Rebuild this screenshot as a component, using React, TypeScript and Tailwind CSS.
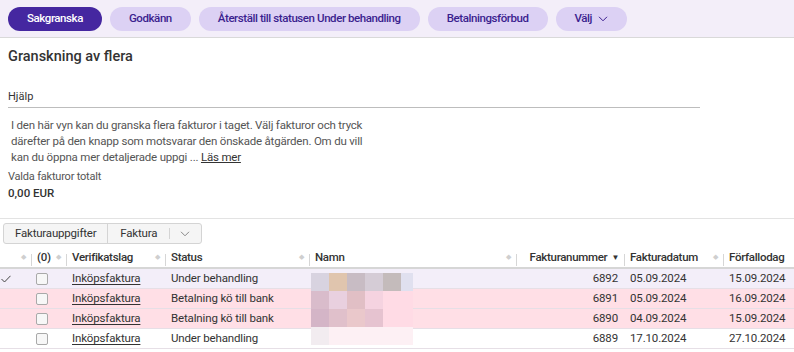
import React from 'react';

const font = { fontFamily: 'Roboto, "Noto Sans", sans-serif' };

const mosaic = [
  ['#d8d3e0', '#e0c5ae', '#c8bcc4', '#d5ccd6', '#c4bbbb', '#e0e0ef'],
  ['#d9bccb', '#e9d0df', '#e1bfc5', '#f5d3e0', '#ffdbe5', '#ffdbe5'],
  ['#d4b5c7', '#e0c0cb', '#eac8cb', '#e6c3d0', '#ffdbe5', '#ffdbe5'],
  ['#f2ecf0', '#fdf0f4', '#fdf0f4', '#fdf0f4', '#fdf0f4', '#fdf0f4'],
];

const rows = [
  { bg: 'bg-[#f3eef9]', checked: true, status: 'Under behandling', nr: '6892', date: '05.09.2024', due: '15.09.2024' },
  { bg: 'bg-[#ffdfe6]', checked: false, status: 'Betalning kö till bank', nr: '6891', date: '05.09.2024', due: '16.09.2024' },
  { bg: 'bg-[#ffdfe6]', checked: false, status: 'Betalning kö till bank', nr: '6890', date: '04.09.2024', due: '15.09.2024' },
  { bg: 'bg-white', checked: false, status: 'Under behandling', nr: '6889', date: '17.10.2024', due: '27.10.2024' },
];

const cols = 'grid grid-cols-[31px_35px_99px_144px_207px_108px_99px_1fr]';

function Diamond() {
  return <span className="text-[7px] leading-none text-[#cfcfcf]">◆</span>;
}

function HeadCell({ label, first, right }: { label: string; first?: boolean; right?: boolean }) {
  return (
    <div className="relative flex items-center h-full pl-[6px] pr-[5px]">
      {!first && <div className="absolute left-0 bottom-[1px] h-[12px] w-px bg-[#d6d6d6]" />}
      {right ? (
        <>
          <span className="flex-1 text-right">{label}</span>
          <span className="ml-[4px] text-[8px] text-[#333]">▼</span>
        </>
      ) : (
        <>
          <span className="flex-1">{label}</span>
          {label !== 'Förfallodag' && <Diamond />}
        </>
      )}
    </div>
  );
}

function Btn({ children, primary }: { children: React.ReactNode; primary?: boolean }) {
  return (
    <button
      className={
        'h-[24px] rounded-full px-[19px] text-[11.5px] tracking-[-0.42px] font-medium flex items-center gap-[6px] ' +
        (primary ? 'bg-[#4527a0] text-white' : 'bg-[#dcd1f4] text-[#3b1f8f]')
      }
    >
      {children}
    </button>
  );
}

export default function App() {
  return (
    <div className="w-[794px] h-[352px] overflow-hidden bg-white text-[#333]" style={font}>
      <div className="h-[38px] bg-[#f3eef9] border-b border-[#d9d9d9] flex items-center gap-[8px] pl-[8px]">
        <Btn primary>Sakgranska</Btn>
        <Btn>Godkänn</Btn>
        <Btn>Återställ till statusen Under behandling</Btn>
        <Btn>Betalningsförbud</Btn>
        <Btn>
          Välj
          <svg width="10" height="6" viewBox="0 0 10 6" fill="none" stroke="currentColor" strokeWidth="1">
            <path d="M1 0.8 L5 4.8 L9 0.8" />
          </svg>
        </Btn>
      </div>

      <div className="px-[8px] pt-[9px]">
        <h1 className="text-[14.5px] font-medium text-[#333] leading-[20px]">Granskning av flera</h1>
        <div className="mt-[22px] w-[692px] border-b border-[#bdbdbd] pb-[2px] text-[11px] leading-[16px] text-[#333]">Hjälp</div>
        <p className="mt-[9px] pl-[3px] w-[370px] text-[11.5px] tracking-[-0.2px] leading-[16px] text-[#555]">
          I den här vyn kan du granska flera fakturor i taget. Välj fakturor och tryck därefter på den knapp som motsvarar den önskade åtgärden. Om du vill kan du öppna mer detaljerade uppgi ...{' '}
          <a className="underline text-[#333]">Läs mer</a>
        </p>
        <div className="mt-[4px] text-[11px] tracking-[-0.2px] leading-[16px] text-[#555]">Valda fakturor totalt</div>
        <div className="text-[11.5px] leading-[16px] font-medium text-[#333]">0,00 EUR</div>
      </div>

      <div className="mt-[17px] border-t border-[#e3e3e3]" />

      <div className="ml-[3px] mt-[4px] inline-flex h-[21px] items-stretch rounded-[3px] border border-[#d4d4d4] bg-[#f5f5f5] text-[11.5px] tracking-[-0.2px] text-[#333]">
        <div className="flex items-center px-[11px] border-r border-[#d4d4d4]">Fakturauppgifter</div>
        <div className="flex items-center px-[12px]">Faktura</div>
        <div className="flex items-center px-[11px] relative">
          <div className="absolute left-0 top-[4px] bottom-[4px] w-px bg-[#d4d4d4]" />
          <svg width="10" height="6" viewBox="0 0 10 6" fill="none" stroke="#888" strokeWidth="1">
            <path d="M1 0.8 L5 4.8 L9 0.8" />
          </svg>
        </div>
      </div>

      <div className="relative mt-[4px] text-[11.5px] tracking-[-0.15px]">
        <div className={cols + ' h-[21px] font-medium tracking-[-0.3px] text-[#333] border-b-2 border-[#d6d6d6]'}>
          <HeadCell label="" first />
          <HeadCell label="(0)" />
          <HeadCell label="Verifikatslag" />
          <HeadCell label="Status" />
          <HeadCell label="Namn" />
          <HeadCell label="Fakturanummer" right />
          <HeadCell label="Fakturadatum" />
          <HeadCell label="Förfallodag" />
        </div>
        {rows.map((r, i) => (
          <div key={i} className={cols + ' h-[20px] items-center border-b border-[#e6dfe6] ' + r.bg}>
            <div className="flex items-center justify-start pl-[1px]">
              {r.checked && (
                <svg width="10" height="8" viewBox="0 0 10 8" fill="none" stroke="#444" strokeWidth="1">
                  <path d="M0.5 4 L3.5 7 L9.5 0.8" />
                </svg>
              )}
            </div>
            <div className="pl-[5px]">
              <div className="h-[12px] w-[12px] rounded-[2px] border border-[#a9a9a9] bg-[#f7f7f7]" />
            </div>
            <div className="pl-[6px]">
              <span className="underline underline-offset-[2px] text-[#333]">Inköpsfaktura</span>
            </div>
            <div className="pl-[6px]">{r.status}</div>
            <div />
            <div className="pr-[6px] text-right">{r.nr}</div>
            <div className="pl-[6px]">{r.date}</div>
            <div className="pl-[6px]">{r.due}</div>
          </div>
        ))}
        <div className="absolute left-[311px] top-[25px] flex flex-col">
          {mosaic.map((line, i) => (
            <div key={i} className="flex">
              {line.map((c, j) => (
                <div
                  key={j}
                  className={(j === 5 ? 'w-[12px]' : 'w-[18px]') + ' h-[18px]'}
                  style={{ backgroundColor: c }}
                />
              ))}
            </div>
          ))}
        </div>
      </div>
    </div>
  );
}
